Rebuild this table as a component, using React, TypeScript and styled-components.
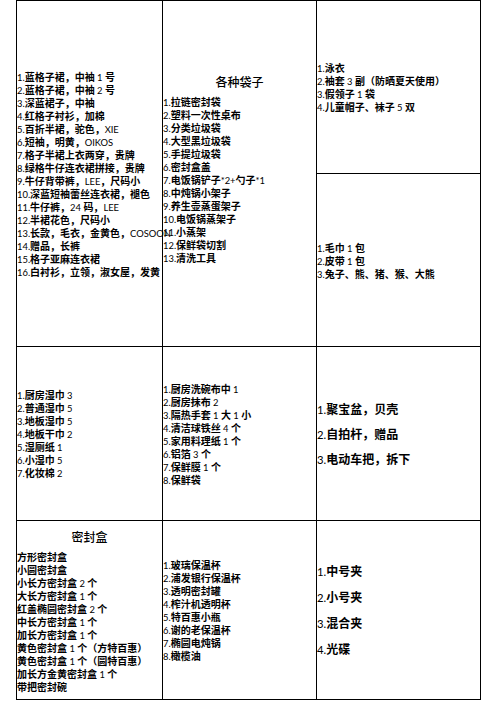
import React from "react";
import styled, { createGlobalStyle } from "styled-components";

const Global = createGlobalStyle`
  html, body { margin: 0; padding: 0; background: #fff; }
  body { font-family: Lato, "Noto Sans CJK SC", sans-serif; color: #000; }
`;

const Sheet = styled.div`
  margin-left: 16px;
  display: grid;
  grid-template-columns: 146px 154px 164px;
  grid-template-rows: 173px 173px 174px 179px;
  width: 465px;
  border-top: 1px solid #000;
  border-left: 1px solid #000;
  box-sizing: border-box;
`;

const Cell = styled.div<{ $span?: number; $shift?: number }>`
  grid-row: span ${(p) => p.$span ?? 1};
  border-right: 1px solid #000;
  border-bottom: 1px solid #000;
  display: flex;
  flex-direction: column;
  justify-content: center;
  padding-bottom: ${(p) => p.$shift ?? 0}px;
  min-width: 0;
  overflow: visible;
  position: relative;
`;

const Title = styled.div`
  font-family: "Noto Sans CJK SC", sans-serif;
  font-size: 12px;
  line-height: 20px;
  height: 20px;
  margin-bottom: 3px;
  text-align: center;
  font-weight: 500;
`;

const Line = styled.div<{ $size: number; $lh: number }>`
  font-size: ${(p) => p.$size}px;
  line-height: ${(p) => p.$lh}px;
  height: ${(p) => p.$lh}px;
  white-space: nowrap;
  overflow: visible;
`;

const Han = styled.span`
  display: inline-block;
  font-family: "Noto Sans CJK SC", sans-serif;
  font-weight: 700;
`;

const Latin = styled.span`
  display: inline-block;
  white-space: pre;
  font-family: Lato, sans-serif;
  font-size: 0.94em;
`;

const HAN_RE = /([\u3000-\u303f\u4e00-\u9fff\uff00-\uffef]+)/;

function Text({ s }: { s: string }) {
  const parts = s.split(HAN_RE).filter(Boolean);
  return (
    <>
      {parts.map((p, i) =>
        /[\u3000-\u303f\u4e00-\u9fff\uff00-\uffef]/.test(p) ? (
          <Han key={i}>{p}</Han>
        ) : (
          <Latin key={i}>{p}</Latin>
        )
      )}
    </>
  );
}

function List({ items, size = 10, lh = 13 }: { items: string[]; size?: number; lh?: number }) {
  return (
    <>
      {items.map((t, i) => (
        <Line key={i} $size={size} $lh={lh}>
          <Text s={t} />
        </Line>
      ))}
    </>
  );
}

const clothes = [
  "1.蓝格子裙，中袖 1 号",
  "2.蓝格子裙，中袖 2 号",
  "3.深蓝裙子，中袖",
  "4.红格子衬衫，加棉",
  "5.百折半裙，驼色，XIE",
  "6.短袖，明黄，OIKOS",
  "7.格子半裙上衣两穿，贵牌",
  "8.绿格牛仔连衣裙拼接，贵牌",
  "9.牛仔背带裤，LEE，尺码小",
  "10.深蓝短袖蕾丝连衣裙，褪色",
  "11.牛仔裤，24 码，LEE",
  "12.半裙花色，尺码小",
  "13.长款，毛衣，金黄色，COSOON",
  "14.赠品，长裤",
  "15.格子亚麻连衣裙",
  "16.白衬衫，立领，淑女屋，发黄",
];

const bags = [
  "1.拉链密封袋",
  "2.塑料一次性桌布",
  "3.分类垃圾袋",
  "4.大型黑垃圾袋",
  "5.手提垃圾袋",
  "6.密封盒盖",
  "7.电饭锅铲子*2+勺子*1",
  "8.中炖锅小架子",
  "9.养生壶蒸蛋架子",
  "10.电饭锅蒸架子",
  "11.小蒸架",
  "12.保鲜袋切割",
  "13.清洗工具",
];

const swim = ["1.泳衣", "2.袖套 3 副（防晒夏天使用）", "3.假领子 1 袋", "4.儿童帽子、袜子 5 双"];
const towels = ["1.毛巾 1 包", "2.皮带 1 包", "3.兔子、熊、猪、猴、大熊"];

const wipes = ["1.厨房湿巾 3", "2.普通湿巾 5", "3.地板湿巾 5", "4.地板干巾 2", "5.湿厕纸 1", "6.小湿巾 5", "7.化妆棉 2"];
const kitchen = [
  "1.厨房洗碗布中 1",
  "2.厨房抹布 2",
  "3.隔热手套 1 大 1 小",
  "4.清洁球铁丝 4 个",
  "5.家用料理纸 1 个",
  "6.铝箔 3 个",
  "7.保鲜膜 1 个",
  "8.保鲜袋",
];
const misc = ["1.聚宝盆，贝壳", "2.自拍杆，赠品", "3.电动车把，拆下"];

const boxes = [
  "方形密封盒",
  "小圆密封盒",
  "小长方密封盒 2 个",
  "大长方密封盒 1 个",
  "红盖椭圆密封盒 2 个",
  "中长方密封盒 1 个",
  "加长方密封盒 1 个",
  "黄色密封盒 1 个（方特百惠）",
  "黄色密封盒 1 个（圆特百惠）",
  "加长方金黄密封盒 1 个",
  "带把密封碗",
];
const cups = ["1.玻璃保温杯", "2.浦发银行保温杯", "3.透明密封罐", "4.榨汁机透明杯", "5.特百惠小瓶", "6.谢的老保温杯", "7.椭圆电炖锅", "8.橄榄油"];
const clips = ["1.中号夹", "2.小号夹", "3.混合夹", "4.光碟"];

export default function App() {
  return (
    <>
      <Global />
      <Sheet>
        <Cell $span={2}>
          <List items={clothes} />
        </Cell>
        <Cell $span={2} $shift={12}>
          <Title>各种袋子</Title>
          <List items={bags} />
        </Cell>
        <Cell>
          <List items={swim} />
        </Cell>
        <Cell>
          <List items={towels} />
        </Cell>
        <Cell>
          <List items={wipes} />
        </Cell>
        <Cell>
          <List items={kitchen} />
        </Cell>
        <Cell>
          <List items={misc} size={12} lh={25} />
        </Cell>
        <Cell>
          <Title>密封盒</Title>
          <List items={boxes} />
        </Cell>
        <Cell>
          <List items={cups} />
        </Cell>
        <Cell>
          <List items={clips} size={12} lh={26} />
        </Cell>
      </Sheet>
    </>
  );
}
